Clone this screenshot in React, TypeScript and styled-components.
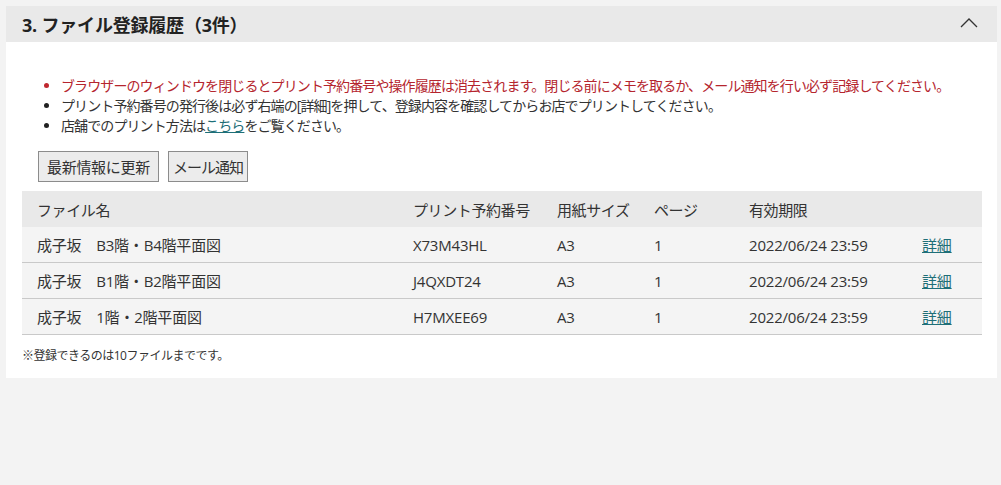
import styled, { createGlobalStyle } from "styled-components";

const GlobalStyle = createGlobalStyle`
  html, body {
    margin: 0;
    background: #f3f3f3;
  }
  body {
    padding: 6px 4px 0 6px;
    font-family: "Open Sans", "Noto Sans CJK JP", sans-serif;
    color: #333;
  }
`;

type Row = {
  name: string;
  code: string;
  size: string;
  pages: number;
  expires: string;
};

const rows: Row[] = [
  { name: "成子坂　B3階・B4階平面図", code: "X73M43HL", size: "A3", pages: 1, expires: "2022/06/24 23:59" },
  { name: "成子坂　B1階・B2階平面図", code: "J4QXDT24", size: "A3", pages: 1, expires: "2022/06/24 23:59" },
  { name: "成子坂　1階・2階平面図", code: "H7MXEE69", size: "A3", pages: 1, expires: "2022/06/24 23:59" },
];

// column widths in px, last one takes the rest
const columns = [376, 144, 97, 95, 173];

export default function App() {
  return (
    <>
      <GlobalStyle />
      <Panel>
        <Header>
          <Title>3. ファイル登録履歴（3件）</Title>
          <svg width="18" height="11" viewBox="0 0 18 11" fill="none">
            <path d="M1 10 L9 2 L17 10" stroke="#333" strokeWidth="1.3" />
          </svg>
        </Header>
        <Body>
          <Notes>
            <Note $warn>
              ブラウザーのウィンドウを閉じるとプリント予約番号や操作履歴は消去されます。閉じる前にメモを取るか、メール通知を行い必ず記録してください。
            </Note>
            <Note>
              プリント予約番号の発行後は必ず右端の[詳細]を押して、登録内容を確認してからお店でプリントしてください。
            </Note>
            <Note>
              店舗でのプリント方法は<Link href="#">こちら</Link>をご覧ください。
            </Note>
          </Notes>
          <Actions>
            <Button>最新情報に更新</Button>
            <Button $tight>メール通知</Button>
          </Actions>
          <Table>
            <colgroup>
              {columns.map((w, i) => (
                <col key={i} style={{ width: w }} />
              ))}
              <col />
            </colgroup>
            <thead>
              <tr>
                <Th>ファイル名</Th>
                <Th>プリント予約番号</Th>
                <Th>用紙サイズ</Th>
                <Th>ページ</Th>
                <Th>有効期限</Th>
                <Th />
              </tr>
            </thead>
            <tbody>
              {rows.map((r) => (
                <tr key={r.code}>
                  <Td>{r.name}</Td>
                  <Td>{r.code}</Td>
                  <Td>{r.size}</Td>
                  <Td>{r.pages}</Td>
                  <Td>{r.expires}</Td>
                  <Td>
                    <Link href="#">詳細</Link>
                  </Td>
                </tr>
              ))}
            </tbody>
          </Table>
          <Footnote>※登録できるのは10ファイルまでです。</Footnote>
        </Body>
      </Panel>
    </>
  );
}

const Panel = styled.section`
  background: #fff;
`;

const Header = styled.div`
  height: 36px;
  background: #e9e9e9;
  display: flex;
  align-items: center;
  justify-content: space-between;
  padding: 0 19px 0 16px;

  svg {
    margin-top: -3px;
  }
`;

const Title = styled.h2`
  margin: 0;
  font-size: 18px;
  font-weight: 700;
  color: #222;
  letter-spacing: -0.2px;
`;

const Body = styled.div`
  padding: 34px 15px 14px 16px;
`;

const Notes = styled.ul`
  margin: 0;
  padding-left: 39px;
`;

const Note = styled.li<{ $warn?: boolean }>`
  font-size: 14px;
  line-height: 20px;
  letter-spacing: -0.9px;
  color: ${(p) => (p.$warn ? "#b5252e" : "#333")};

  &::marker {
    color: ${(p) => (p.$warn ? "#c0282f" : "#222")};
  }
`;

const Link = styled.a`
  color: #1e6f78;
  text-decoration: underline;
`;

const Actions = styled.div`
  display: flex;
  gap: 9px;
  padding: 15px 0 9px 16px;
`;

const Button = styled.button<{ $tight?: boolean }>`
  height: 31px;
  padding: 0 ${(p) => (p.$tight ? 4 : 8)}px;
  background: #ececec;
  border: 1px solid #8c8c8c;
  border-radius: 0;
  font-family: inherit;
  font-size: 15px;
  color: #333;
  letter-spacing: ${(p) => (p.$tight ? "-1px" : "-0.3px")};
`;

const Table = styled.table`
  width: 100%;
  table-layout: fixed;
  border-collapse: collapse;
  font-size: 15px;
  color: #333;
`;

const Th = styled.th`
  height: 36px;
  padding: 0 0 0 15px;
  background: #e9e9e9;
  font-weight: 400;
  text-align: left;
  white-space: nowrap;
  letter-spacing: -0.4px;
`;

const Td = styled.td`
  height: 35px;
  padding: 0 0 0 15px;
  background: #f4f4f4;
  border-bottom: 1px solid #c9c9c9;
  white-space: nowrap;
  letter-spacing: -0.2px;
`;

const Footnote = styled.p`
  margin: 13px 0 0;
  font-size: 12px;
  line-height: 16px;
  letter-spacing: -0.5px;
  color: #333;
`;
